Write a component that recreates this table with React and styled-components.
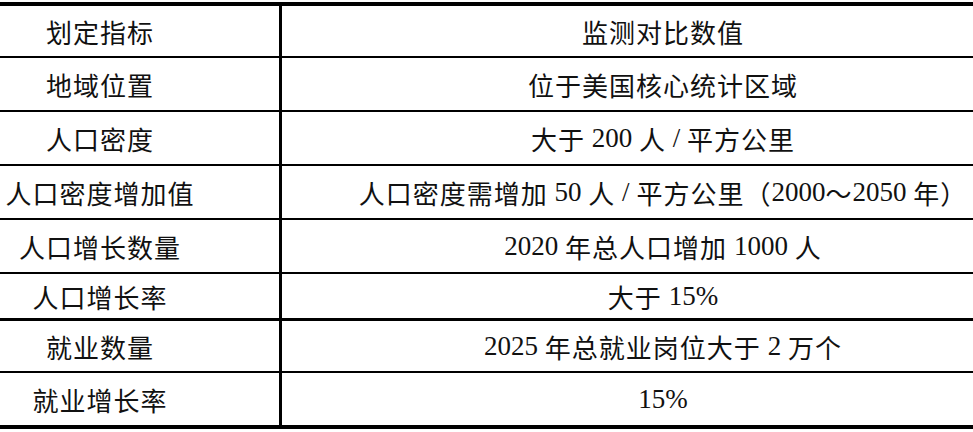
import styled, { createGlobalStyle } from "styled-components";

const rows = [
  { label: "划定指标", value: "监测对比数值", height: 50 },
  { label: "地域位置", value: "位于美国核心统计区域", height: 52 },
  { label: "人口密度", value: "大于 200 人 / 平方公里", height: 52 },
  {
    label: "人口密度增加值",
    value: "人口密度需增加 50 人 / 平方公里（2000～2050 年）",
    height: 52,
  },
  { label: "人口增长数量", value: "2020 年总人口增加 1000 人", height: 52 },
  { label: "人口增长率", value: "大于 15%", height: 44, heavy: true },
  { label: "就业数量", value: "2025 年总就业岗位大于 2 万个", height: 50 },
  { label: "就业增长率", value: "15%", height: 52 },
];

// latin bits (numbers, %, /) get the serif face, the rest stays CJK
function Value({ text }) {
  const parts = text.split(/([0-9%/ ]+)/).filter(Boolean);
  return parts.map((part, i) =>
    /[0-9%/ ]/.test(part) ? <Num key={i}>{part}</Num> : <span key={i}>{part}</span>
  );
}

export default function App() {
  return (
    <>
      <GlobalStyle />
      <Table>
        {rows.map((row, i) => (
          <Row key={i} $height={row.height} $heavy={row.heavy}>
            <LabelCell>{row.label}</LabelCell>
            <ValueCell>
              <Value text={row.value} />
            </ValueCell>
          </Row>
        ))}
      </Table>
    </>
  );
}

const GlobalStyle = createGlobalStyle`
  body {
    margin: 0;
    background: #ffffff;
  }
`;

const Table = styled.div`
  margin-top: 2px;
  width: 973px;
  border-top: 4px solid #000;
  border-bottom: 4px solid #000;
  display: flex;
  flex-direction: column;
  color: #111;
`;

const Row = styled.div`
  display: flex;
  height: ${(p) => p.$height}px;
  box-sizing: content-box;
  border-bottom: ${(p) => (p.$heavy ? 3 : 2)}px solid #000;

  &:last-child {
    border-bottom: none;
  }
`;

const LabelCell = styled.div`
  width: 282px;
  padding-right: 79px;
  box-sizing: border-box;
  flex: none;
  display: flex;
  align-items: center;
  justify-content: center;
  border-right: 3px solid #000;
  font-family: "Noto Sans CJK SC", "Noto Sans", sans-serif;
  font-size: 26px;
  letter-spacing: 1px;
  white-space: nowrap;
`;

const ValueCell = styled.div`
  flex: 1;
  padding-left: 71px;
  display: flex;
  align-items: center;
  justify-content: center;
  font-family: "Noto Sans CJK SC", serif;
  font-size: 26px;
  letter-spacing: 1px;
  white-space: pre;
`;

const Num = styled.span`
  font-family: "Liberation Serif", "Times New Roman", serif;
  font-size: 27px;
  letter-spacing: 0;
`;
